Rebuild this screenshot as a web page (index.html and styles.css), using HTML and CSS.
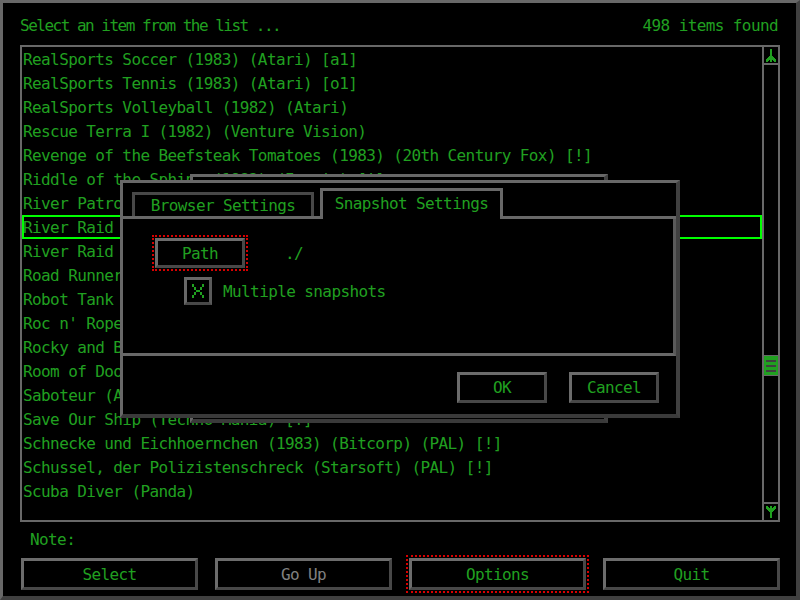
FILE: index.html
```html
<!DOCTYPE html>
<html>
<head>
<meta charset="utf-8">
<link rel="stylesheet" href="styles.css">
</head>
<body>
<div class="screen">
  <div class="header">
    <span class="title">Select an item from the list ...</span>
    <span class="count">498 items found</span>
  </div>
  <div class="listbox">
    <ul class="list">
      <li>RealSports Soccer (1983) (Atari) [a1]</li>
      <li>RealSports Tennis (1983) (Atari) [o1]</li>
      <li>RealSports Volleyball (1982) (Atari)</li>
      <li>Rescue Terra I (1982) (Venture Vision)</li>
      <li>Revenge of the Beefsteak Tomatoes (1983) (20th Century Fox) [!]</li>
      <li>Riddle of the Sphinx (1982) (Imagic) [!]</li>
      <li>River Patrol (1984) (Tigervision)</li>
      <li class="sel">River Raid (1982) (Activision) [!]</li>
      <li>River Raid II (1988) (Activision)</li>
      <li>Road Runner (1989) (Atari) [!]</li>
      <li>Robot Tank (1983) (Activision) [!]</li>
      <li>Roc n' Rope (1984) (Coleco) [!]</li>
      <li>Rocky and Bullwinkle (Mattel)</li>
      <li>Room of Doom (1982) (CommaVid)</li>
      <li>Saboteur (Atari)</li>
      <li>Save Our Ship (Techno Mania) [!]</li>
      <li>Schnecke und Eichhoernchen (1983) (Bitcorp) (PAL) [!]</li>
      <li>Schussel, der Polizistenschreck (Starsoft) (PAL) [!]</li>
      <li>Scuba Diver (Panda)</li>
    </ul>
    <div class="scrollbar">
      <div class="arrow up">
        <svg width="10" height="13" viewBox="0 0 10 13" shape-rendering="crispEdges"><path d="M4 0h2v13h-2z M4 6 L0 11 v2 h2 L4 10z M6 6 L10 11 v2 h-2 L6 10z" fill="#20a020"/></svg>
      </div>
      <div class="track">
        <div class="thumb"><i></i><i></i><i></i></div>
      </div>
      <div class="arrow down">
        <svg width="10" height="12" viewBox="0 0 10 12" shape-rendering="crispEdges"><path d="M4 0h2v12h-2z M4 7 L0 2 v-2 h2 L4 3z M6 7 L10 2 v-2 h-2 L6 3z" fill="#20a020"/></svg>
      </div>
    </div>
  </div>
  <div class="note">Note:</div>
  <div class="buttons">
    <div class="btn">Select</div>
    <div class="btn disabled">Go Up</div>
    <div class="btn focus">Options</div>
    <div class="btn">Quit</div>
  </div>

  <div class="dialog back"></div>
  <div class="dialog front">
    <div class="tabs">
      <div class="tab">Browser Settings</div>
      <div class="tab active">Snapshot Settings</div>
    </div>
    <div class="panel">
      <div class="path-row">
        <div class="btn small focus">Path</div>
        <span class="path">./</span>
      </div>
      <div class="check-row">
        <div class="checkbox">
          <svg width="12" height="14" viewBox="0 0 12 14" shape-rendering="crispEdges"><path d="M0 0h2v3h-2z M10 0h2v3h-2z M2 3h2v3h-2z M8 3h2v3h-2z M4 6h4v2h-4z M2 8h2v3h-2z M8 8h2v3h-2z M0 11h2v3h-2z M10 11h2v3h-2z" fill="#20a020"/></svg>
        </div>
        <span>Multiple snapshots</span>
      </div>
    </div>
    <div class="footer">
      <div class="btn small ok">OK</div>
      <div class="btn small ok">Cancel</div>
    </div>
  </div>
</div>
</body>
</html>
```

FILE: styles.css
```css
html, body {
  margin: 0;
  padding: 0;
  background: #000;
}

.screen {
  position: relative;
  width: 800px;
  height: 600px;
  box-sizing: border-box;
  background: #000;
  border-style: solid;
  border-width: 3px 4px 4px 3px;
  border-color: #686868 #404040 #404040 #686868;
  padding: 0 16px 0 17px;
  display: flex;
  flex-direction: column;
  font-family: "DejaVu Sans Mono", monospace;
  font-size: 16px;
  letter-spacing: -0.6px;
  color: #20a020;
  overflow: hidden;
}

.header {
  height: 42px;
  box-sizing: border-box;
  padding-top: 3px;
  flex: none;
  display: flex;
  justify-content: space-between;
  align-items: center;
  padding-right: 2px;
}

.title {
  letter-spacing: -1.5px;
}

.listbox {
  height: 477px;
  flex: none;
  box-sizing: border-box;
  border: 2px solid #686868;
  display: flex;
}

.list {
  flex: 1;
  list-style: none;
  margin: 0;
  padding: 0;
  overflow: hidden;
}

.list li {
  height: 24px;
  line-height: 25px;
  padding-left: 1px;
  white-space: nowrap;
  overflow: hidden;
}

.list li.sel {
  box-shadow: inset 0 0 0 2px #00ff00;
}

.scrollbar {
  width: 14px;
  border-left: 2px solid #686868;
  display: flex;
  flex-direction: column;
}

.arrow {
  height: 16px;
  display: flex;
  align-items: center;
  justify-content: center;
}

.arrow.up {
  border-bottom: 2px solid #686868;
}

.arrow.down {
  border-top: 2px solid #686868;
}

.arrow svg {
  display: block;
}

.track {
  flex: 1;
  position: relative;
}

.thumb {
  position: absolute;
  left: 0;
  right: 0;
  top: 291px;
  height: 19px;
  box-sizing: border-box;
  background: #20a020;
  box-shadow: 0 0 0 1px #686868;
  display: flex;
  flex-direction: column;
  align-items: center;
  justify-content: center;
  gap: 3px;
}

.thumb i {
  display: block;
  width: 10px;
  height: 2px;
  background: #404040;
}

.note {
  height: 34px;
  flex: none;
  line-height: 36px;
  padding-left: 10px;
}

.buttons {
  display: grid;
  grid-template-columns: repeat(4, 177px);
  column-gap: 17px;
  padding-left: 1px;
  margin-top: 2px;
}

.btn {
  height: 32px;
  box-sizing: border-box;
  border-style: solid;
  border-width: 3px;
  border-color: #6c6c6c #484848 #484848 #6c6c6c;
  display: flex;
  align-items: center;
  justify-content: center;
  color: #20a020;
  background: #000;
}

.btn.disabled {
  color: #808080;
}

.focus {
  outline: 2px dotted #d80000;
  outline-offset: 1px;
}

.dialog {
  position: absolute;
  box-sizing: border-box;
  background: #000;
  border-style: solid;
  border-width: 3px 4px 4px 3px;
  border-color: #686868 #404040 #3a3a3a #686868;
}

.back {
  left: 187px;
  top: 171px;
  width: 418px;
  height: 249px;
}

.front {
  left: 117px;
  top: 177px;
  width: 560px;
  height: 238px;
  display: flex;
  flex-direction: column;
}

.tabs {
  height: 33px;
  flex: none;
  display: flex;
  align-items: flex-end;
  padding-left: 9px;
  border-bottom: 3px solid #686868;
}

.tab {
  box-sizing: border-box;
  width: 182px;
  height: 24px;
  border: 3px solid #484848;
  border-bottom: none;
  display: flex;
  align-items: center;
  justify-content: center;
  margin-right: 6px;
}

.tab.active {
  width: 183px;
  height: 31px;
  margin-bottom: -3px;
  padding-bottom: 3px;
  border-color: #686868;
  background: #000;
  position: relative;
}

.panel {
  height: 137px;
  flex: none;
  box-sizing: border-box;
  border-right: 3px solid #5a5a5a;
  border-bottom: 3px solid #686868;
  padding: 19px 0 0 32px;
}

.path-row {
  display: flex;
  align-items: center;
  gap: 40px;
}

.btn.small {
  width: 90px;
  height: 30px;
}

.check-row {
  display: flex;
  align-items: center;
  gap: 11px;
  margin-top: 9px;
  padding-left: 29px;
}

.checkbox {
  width: 28px;
  height: 28px;
  box-sizing: border-box;
  border-style: solid;
  border-width: 3px;
  border-color: #686868 #5a5a5a #484848 #686868;
  display: flex;
  align-items: center;
  justify-content: center;
}

.checkbox svg {
  display: block;
}

.footer {
  display: flex;
  justify-content: flex-end;
  gap: 22px;
  padding: 16px 17px 0 0;
}

.btn.ok {
  height: 31px;
}
```
